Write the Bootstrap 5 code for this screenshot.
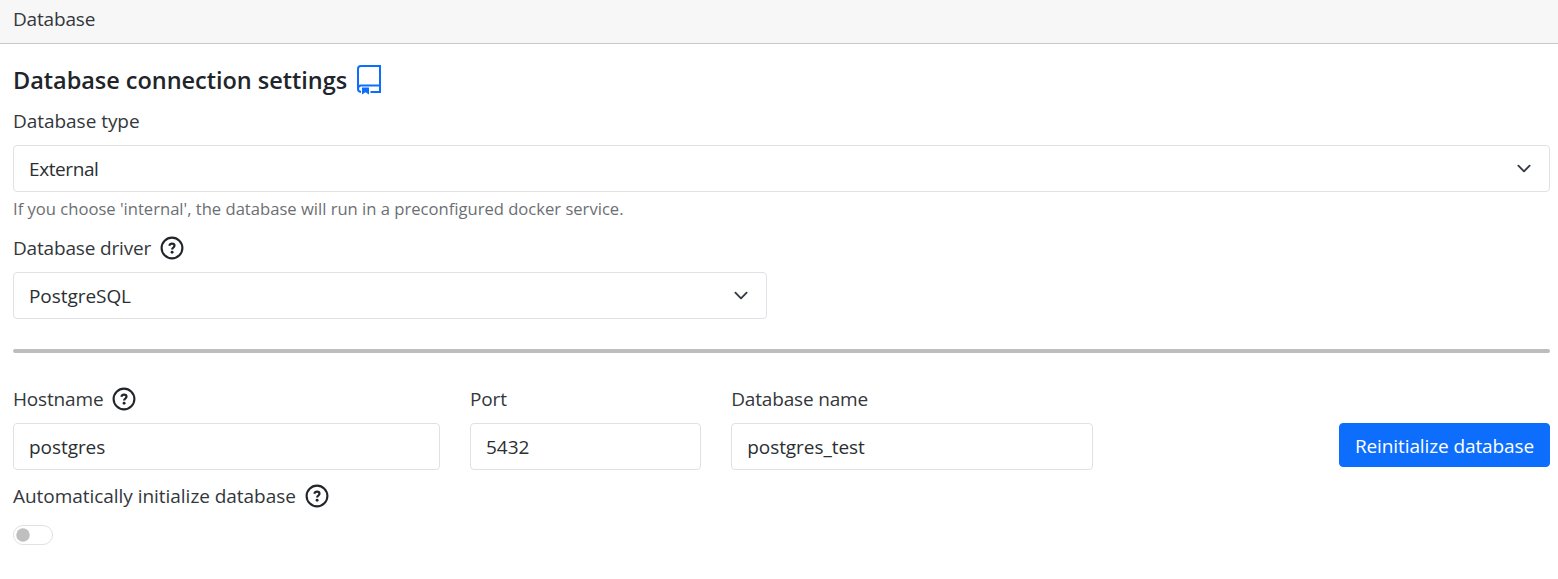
<!DOCTYPE html>
<html lang="en">
<head>
<meta charset="utf-8">
<meta name="viewport" content="width=device-width, initial-scale=1">
<title>Database</title>
<link href="https://cdn.jsdelivr.net/npm/bootstrap@5.3.0/dist/css/bootstrap.min.css" rel="stylesheet">
<style>
  html { font-size: 20px; }
  body { font-family: "Open Sans", "Noto Sans", sans-serif; font-size: 19px; line-height: 30px; letter-spacing: -.04px; color: #212529; overflow: hidden; }
  .card { border: 0; border-radius: 0; }
  .card-header { height: 44px; padding: 4px 13px 9px; background: #f7f7f7; border-bottom: 1px solid #c8c8c8; border-radius: 0 !important; color: #33373b; }
  .card-body { padding: 21px 8px 0 13px; }
  .settings-title { font-size: 23.5px; line-height: 30px; font-weight: 600; gap: 10px; letter-spacing: -.03px; }
  .form-label { display: flex; align-items: center; height: 30px; gap: 9px; padding-top: 2px; margin-bottom: 10px; color: #33373b; }
  .form-label svg { color: #212529; }
  .form-control, .form-select { height: 47px; font-size: 19px; line-height: 30px; letter-spacing: -.06px; border: 1px solid #dee2e6; border-radius: 4px; color: #2b2f33; }
  .form-select { background-position: right 15px center; background-size: 20px 15px; }
  #dbtype { letter-spacing: -.4px; }
  .form-text { font-size: 16.6px; line-height: 26px; letter-spacing: 0; margin-top: 4px; color: #6c6f73; }
  .divider { height: 4px; margin: 30px 0; border: 0; border-radius: 2px; background: #bdbdbd; opacity: 1; }
  .btn-primary { height: 44px; width: 211px; padding: 2px 0 0; font-size: 19px; letter-spacing: -.1px; border-radius: 4px; background: #0d6efd; border-color: #0d6efd; margin-bottom: 3px; }
  .form-switch { min-height: 20px; padding: 0; margin: 0; line-height: 0; }
  .form-switch .form-check-input { float: none; display: block; width: 40px; height: 20px; margin: 0; border: 1px solid #dee2e6; }
  .tx { white-space: nowrap; }
  .tight { letter-spacing: -.17px; }
</style>
</head>
<body>
<svg class="d-none" xmlns="http://www.w3.org/2000/svg">
  <symbol id="help" viewBox="0 0 24 24">
    <circle cx="12" cy="12" r="10.4" fill="none" stroke="currentColor" stroke-width="2.100"/>
    <path d="M9.300 9.800C9.700 8.400 10.600 7.700 12 7.700c1.500 0 2.500.8 2.500 2.100 0 1.700-2.300 1.700-2.400 3.700" fill="none" stroke="currentColor" stroke-width="2.200"/>
    <circle cx="12.100" cy="16.200" r="1.450" fill="currentColor"/>
  </symbol>
</svg>
<main class="card">
  <div class="card-header"><span class="tx tight">Database</span></div>
  <div class="card-body">
    <h5 class="settings-title d-flex align-items-center mb-2"><span class="tx">Database connection settings</span>
      <a href="#" class="d-flex" aria-label="Documentation"><svg width="24" height="30" viewBox="0 0 24 30" fill="none" stroke="#0d6efd" stroke-width="2">
        <path d="M4 27C2.300 26.700 1 25.700 1 24V4Q1 1 4 1H23V27H13.500M1 24Q1 20.500 4 20.500H23"/>
        <path d="M5 22.500h7v7l-3.500-2.300L5 29.500z" fill="#0d6efd" stroke="none"/>
      </svg></a>
    </h5>
    <label class="form-label" for="dbtype"><span class="tx">Database type</span></label>
    <select class="form-select" id="dbtype"><option>External</option><option>Internal</option></select>
    <div class="form-text mb-2"><span class="tx">If you choose 'internal', the database will run in a preconfigured docker service.</span></div>
    <div class="row">
      <div class="col-6">
        <label class="form-label" for="driver"><span class="tx tight">Database driver</span><svg width="24" height="24"><use href="#help"/></svg></label>
        <select class="form-select" id="driver"><option>PostgreSQL</option></select>
      </div>
    </div>
    <hr class="divider">
    <div class="row">
      <div class="col">
        <label class="form-label" for="host"><span class="tx tight">Hostname</span><svg width="24" height="24"><use href="#help"/></svg></label>
        <input class="form-control" id="host" value="postgres">
      </div>
      <div class="col-2">
        <label class="form-label" for="port"><span class="tx tight">Port</span></label>
        <input class="form-control" id="port" value="5432">
      </div>
      <div class="col-3">
        <label class="form-label" for="name"><span class="tx tight">Database name</span></label>
        <input class="form-control" id="name" value="postgres_test" spellcheck="false">
      </div>
      <div class="col d-flex align-items-end justify-content-end">
        <button class="btn btn-primary" type="button"><span class="tx">Reinitialize database</span></button>
      </div>
    </div>
    <label class="form-label mt-2" for="auto"><span class="tx">Automatically initialize database</span><svg width="24" height="24"><use href="#help"/></svg></label>
    <div class="form-check form-switch pt-1"><input class="form-check-input" type="checkbox" role="switch" id="auto"></div>
  </div>
</main>
</body>
</html>
